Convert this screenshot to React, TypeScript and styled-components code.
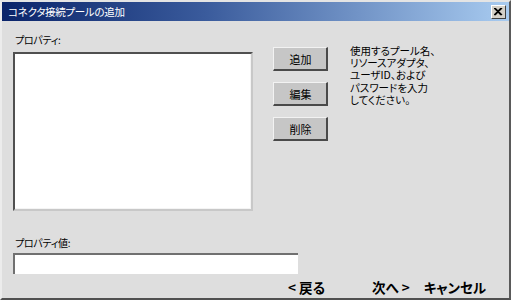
import React from "react";
import styled, { createGlobalStyle } from "styled-components";

const Global = createGlobalStyle`
  html, body { margin: 0; padding: 0; background: #dcdcdc; }
  body { font-family: "Noto Sans CJK JP", "Liberation Sans", sans-serif; }
  * { box-sizing: border-box; }
`;

const Window = styled.div`
  width: 511px;
  height: 300px;
  display: flex;
  flex-direction: column;
  background: #dedede;
  border-top: 2px solid #e4e4e4;
  border-left: 2px solid #ececec;
  border-right: 2px solid #5a5a5a;
  border-bottom: 2px solid #505050;
  font-family: "Noto Sans CJK JP", "Liberation Sans", sans-serif;
  font-feature-settings: "palt";
  color: #000;
  overflow: hidden;
`;

const TitleBar = styled.div`
  height: 19px;
  flex: none;
  display: flex;
  align-items: center;
  justify-content: space-between;
  padding: 0 3px 0 6px;
  background: linear-gradient(90deg, #0a246a 0%, #3a5b9c 40%, #a8cbf0 100%);
`;

const Title = styled.span`
  color: #fff;
  font-size: 10.5px;
  line-height: 12px;
  letter-spacing: -0.3px;
`;

const CloseButton = styled.div`
  width: 15px;
  height: 14px;
  background: #d4d0c8;
  border-top: 1px solid #fff;
  border-left: 1px solid #fff;
  border-right: 1px solid #404040;
  border-bottom: 1px solid #404040;
  display: flex;
  align-items: center;
  justify-content: center;
`;

const Body = styled.div`
  flex: 1;
  display: flex;
  flex-direction: column;
  padding: 13px 0 0 11px;
`;

const TopSection = styled.div`
  display: flex;
  align-items: flex-start;
`;

const Column = styled.div`
  display: flex;
  flex-direction: column;
`;

const Label = styled.div`
  font-size: 10px;
  line-height: 12px;
  height: 12px;
  padding-left: 2px;
  letter-spacing: -0.3px;
  white-space: nowrap;
`;

const ListBox = styled.div`
  margin-top: 6px;
  width: 240px;
  height: 159px;
  background: #fff;
  border-top: 2px solid #505050;
  border-left: 2px solid #505050;
  border-right: 2px solid #c8c8c8;
  border-bottom: 2px solid #c8c8c8;
  box-shadow: inset -1px -1px 0 #f4f4f4;
`;

const ButtonColumn = styled.div`
  display: flex;
  flex-direction: column;
  gap: 11px;
  margin: 13px 0 0 20px;
`;

const Button = styled.div`
  width: 55px;
  height: 24px;
  background: #c6c6c6;
  border-top: 1px solid #f2f2f2;
  border-left: 1px solid #f2f2f2;
  border-right: 2px solid #4a4a4a;
  border-bottom: 2px solid #4a4a4a;
  display: flex;
  align-items: center;
  justify-content: center;
  font-size: 11px;
  line-height: 12px;
  padding-left: 1px;
`;

const HelpText = styled.div`
  margin: 11px 0 0 22px;
  display: flex;
  flex-direction: column;
  font-size: 10.5px;
`;

const HelpLine = styled.div`
  height: 12.2px;
  line-height: 12px;
  white-space: nowrap;
`;

const BottomLabel = styled(Label)`
  margin-top: 26px;
`;

const TextInput = styled.div`
  margin-top: 4px;
  width: 285px;
  height: 21px;
  background: #fff;
  border-top: 2px solid #707070;
  border-left: 2px solid #707070;
`;

const NavRow = styled.div`
  display: flex;
  align-items: center;
  margin-top: 5px;
  padding-left: 275px;
  height: 16px;
`;

const NavButton = styled.span<{ $gap: number }>`
  margin-left: ${(p) => p.$gap}px;
  font-size: 13.5px;
  line-height: 16px;
  font-weight: 700;
  white-space: nowrap;
`;

const helpLines = [
  "使用するプール名、",
  "リソースアダプタ、",
  "ユーザID、および",
  "パスワードを入力",
  "してください。",
];

export default function App() {
  return (
    <>
      <Global />
      <Window>
        <TitleBar>
          <Title>コネクタ接続プールの追加</Title>
          <CloseButton>
            <svg width="9" height="8" viewBox="0 0 9 8">
              <path d="M1 0 L8 7 M0 0 L7 7 M8 0 L1 7 M7 0 L0 7" stroke="#000" strokeWidth="1.2" fill="none" />
            </svg>
          </CloseButton>
        </TitleBar>
        <Body>
          <TopSection>
            <Column>
              <Label>プロパティ:</Label>
              <ListBox />
            </Column>
            <ButtonColumn>
              <Button>追加</Button>
              <Button>編集</Button>
              <Button>削除</Button>
            </ButtonColumn>
            <HelpText>
              {helpLines.map((l) => (
                <HelpLine key={l}>{l}</HelpLine>
              ))}
            </HelpText>
          </TopSection>
          <BottomLabel>プロパティ値:</BottomLabel>
          <TextInput />
          <NavRow>
            <NavButton $gap={0}>&lt; 戻る</NavButton>
            <NavButton $gap={47}>次へ &gt;</NavButton>
            <NavButton $gap={14}>キャンセル</NavButton>
          </NavRow>
        </Body>
      </Window>
    </>
  );
}
